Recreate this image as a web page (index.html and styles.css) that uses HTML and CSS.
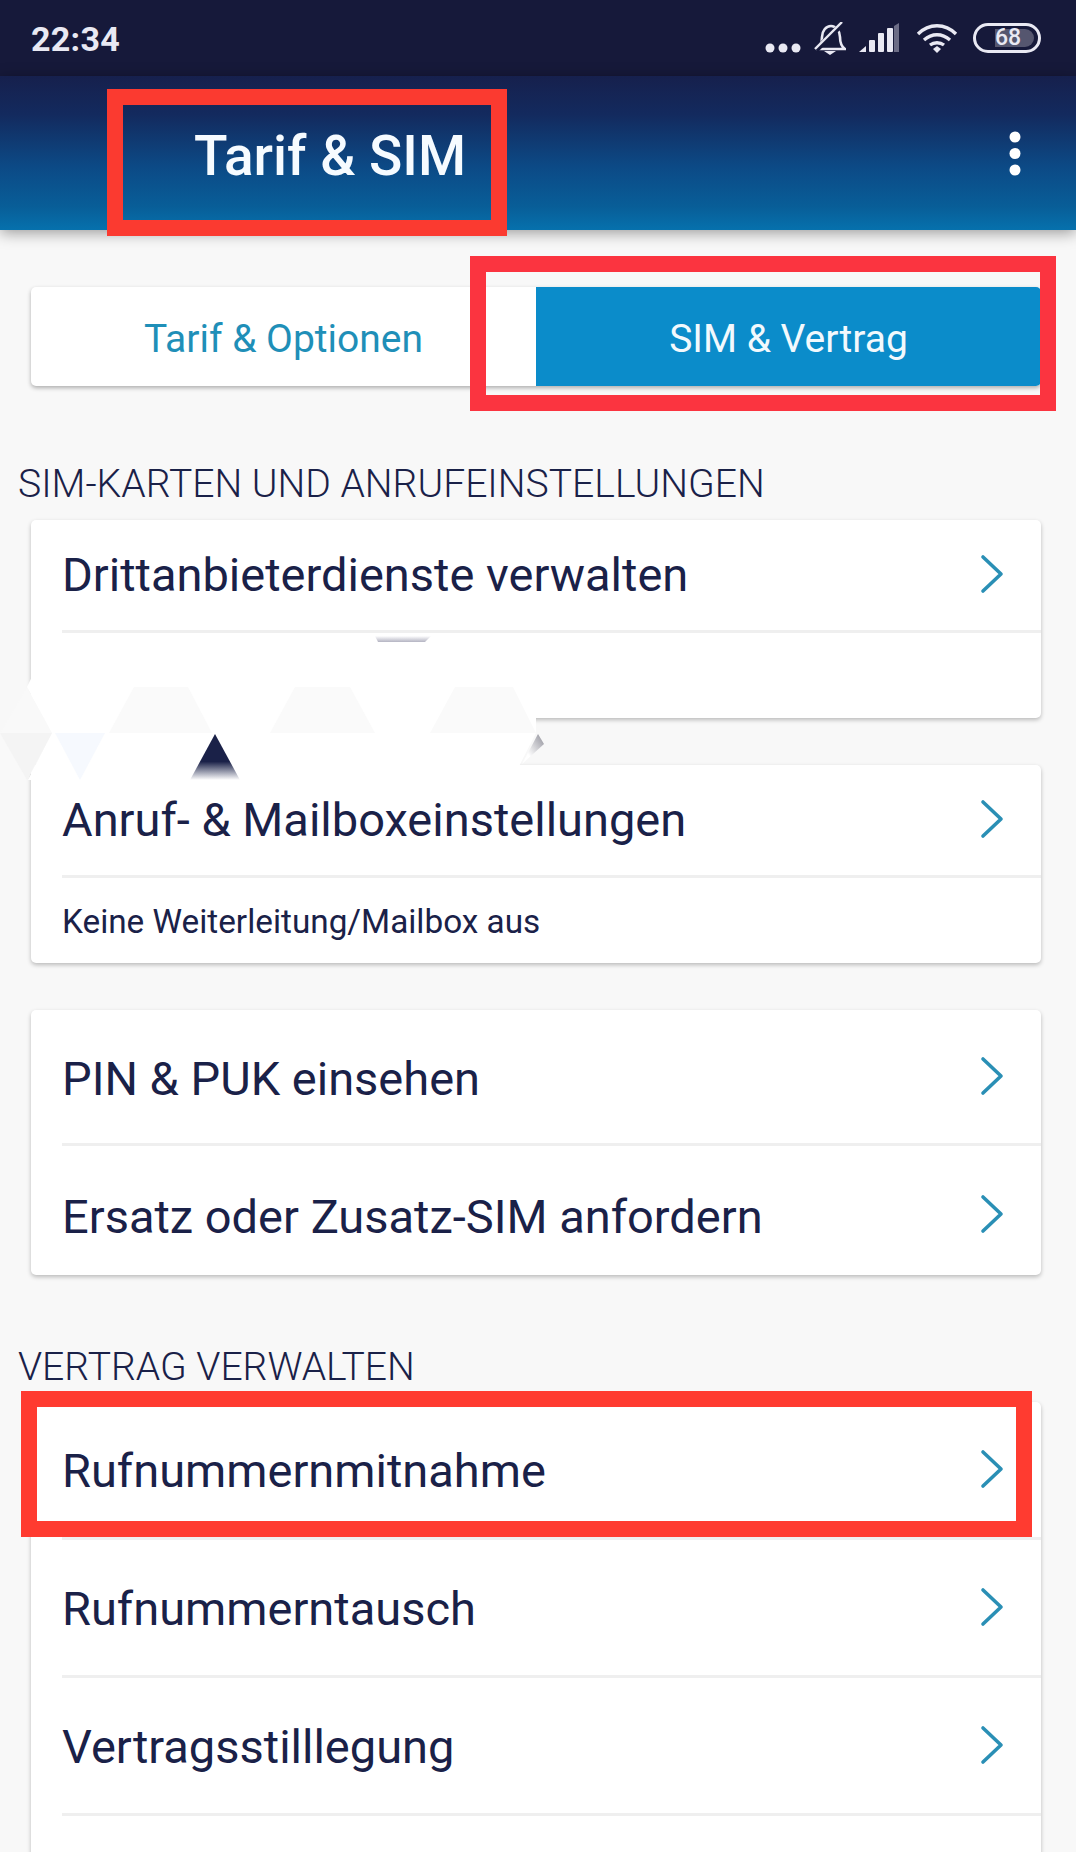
FILE: index.html
```html
<!DOCTYPE html>
<html lang="de">
<head>
<meta charset="utf-8">
<title>Tarif &amp; SIM</title>
<link rel="stylesheet" href="styles.css">
</head>
<body>
<div class="screen">
  <div class="status">
    <span class="time">22:34</span>
    <div class="status-icons">
      <svg class="dots" viewBox="0 0 36 10"><circle cx="5" cy="5" r="4.5"/><circle cx="18" cy="5" r="4.5"/><circle cx="31" cy="5" r="4.5"/></svg>
      <svg class="bell" viewBox="0 0 32 33"><path d="M2 27c4-2 6-6 6-12 0-6 4-11 9-11s9 5 9 11c0 6 2 10 5 12z" fill="none" stroke="#e9e9f3" stroke-width="2.6"/><path d="M10 29h12l-6 4z" fill="#e9e9f3"/><path d="M2 28L29 1" stroke="#16193a" stroke-width="5.500"/><path d="M1 27L28 0" stroke="#e9e9f3" stroke-width="2.4"/></svg>
      <svg class="signal" viewBox="0 0 40 30"><path d="M0 29l7-6v6z" fill="#e9e9f3"/><rect x="10" y="17" width="6" height="12" rx="1" fill="#e9e9f3"/><rect x="19" y="10" width="6" height="19" rx="1" fill="#e9e9f3"/><rect x="28" y="5" width="6" height="24" rx="1" fill="#e9e9f3"/><path d="M35 3l5-3v29h-5z" fill="#6c6d86"/></svg>
      <svg class="wifi" viewBox="0 0 42 30"><g fill="none" stroke="#e9e9f3" stroke-width="3.4"><path d="M2 11c11-11 27-11 38 0"/><path d="M8 17c8-7 18-7 26 0"/><path d="M14 22c4-3 10-3 14 0"/></g><path d="M17 26l4-3 4 3-4 4z" fill="#e9e9f3"/></svg>
      <div class="battery"><span class="battery-level">68</span></div>
    </div>
  </div>
  <header class="appbar">
    <h1 class="title">Tarif &amp; SIM</h1>
    <svg class="more" viewBox="0 0 12 45"><circle cx="6" cy="6" r="5.5"/><circle cx="6" cy="22.500" r="5.500"/><circle cx="6" cy="39" r="5.500"/></svg>
  </header>
  <main class="content">
    <div class="tabs">
      <div class="tab">Tarif &amp; Optionen</div>
      <div class="tab tab-active">SIM &amp; Vertrag</div>
    </div>
    <h2 class="section section-first">SIM-KARTEN UND ANRUFEINSTELLUNGEN</h2>
    <section class="card card-after-label">
      <div class="row row-a"><span>Drittanbieterdienste verwalten</span><svg class="chev" viewBox="0 0 24 40"><path d="M3 3l18 17L3 37"/></svg></div>
      <div class="sub"></div>
    </section>
    <section class="card card-gap">
      <div class="row row-a"><span>Anruf- &amp; Mailboxeinstellungen</span><svg class="chev" viewBox="0 0 24 40"><path d="M3 3l18 17L3 37"/></svg></div>
      <div class="sub">Keine Weiterleitung/Mailbox aus</div>
    </section>
    <section class="card card-gap">
      <div class="row row-b"><span>PIN &amp; PUK einsehen</span><svg class="chev" viewBox="0 0 24 40"><path d="M3 3l18 17L3 37"/></svg></div>
      <div class="row row-c"><span>Ersatz oder Zusatz-SIM anfordern</span><svg class="chev" viewBox="0 0 24 40"><path d="M3 3l18 17L3 37"/></svg></div>
    </section>
    <h2 class="section section-second">VERTRAG VERWALTEN</h2>
    <section class="card card-after-label card-open">
      <div class="row row-d"><span>Rufnummernmitnahme</span><svg class="chev" viewBox="0 0 24 40"><path d="M3 3l18 17L3 37"/></svg></div>
      <div class="row row-d"><span>Rufnummerntausch</span><svg class="chev" viewBox="0 0 24 40"><path d="M3 3l18 17L3 37"/></svg></div>
      <div class="row row-d"><span>Vertragsstilllegung</span><svg class="chev" viewBox="0 0 24 40"><path d="M3 3l18 17L3 37"/></svg></div>
      <div class="row row-d"></div>
    </section>
  </main>

  <svg class="glitch" viewBox="0 0 600 160">
    <defs>
      <linearGradient id="navy" x1="0" y1="0" x2="0" y2="1"><stop offset="0" stop-color="#1a2148"/><stop offset=".6" stop-color="#1a2148"/><stop offset="1" stop-color="#fff"/></linearGradient>
      <linearGradient id="sliver" x1="0" y1="0" x2="0" y2="1"><stop offset="0" stop-color="#fff"/><stop offset="1" stop-color="#b4b4c2"/></linearGradient>
      <linearGradient id="corner" x1="1" y1="0" x2="0" y2="1"><stop offset="0" stop-color="#8f8f99"/><stop offset=".7" stop-color="#fff"/></linearGradient>
    </defs>
    <path d="M40 16L27 47 53 93 27 140H0V93L27 47z" fill="#f9f9f9"/>
    <path d="M42 16H536V93L512 140H28L52 93 27 47z" fill="#fff"/>
    <path d="M134 47H188L212 93H109z" fill="#fafafa"/>
    <path d="M295 47H350L375 93H270z" fill="#fafafa"/>
    <path d="M455 47H513L536 93H430z" fill="#fafafa"/>
    <path d="M0 93H52L27 140z" fill="#f4f4f4"/>
    <path d="M55 93H105L80 140z" fill="#f6f9fe"/>
    <path d="M215 94L240 140H190z" fill="url(#navy)"/>
    <path d="M375 -4H431L425 2H378z" fill="url(#sliver)"/>
    <path d="M538 94L544 104 522 124z" fill="url(#corner)"/>
  </svg>

  <div class="mark mark-title"></div>
  <div class="mark mark-tab"></div>
  <div class="mark mark-row"></div>
</div>
</body>
</html>
```
FILE: styles.css
```css
* { box-sizing: border-box; }
html, body { margin: 0; padding: 0; }
body { background: #f8f8f8; font-family: Roboto, "Noto Sans", sans-serif; color: #1a2148; }
.screen { position: relative; width: 1076px; height: 1852px; overflow: hidden; background: #f8f8f8; }

.status { height: 76px; background: #16193a; display: flex; align-items: center; justify-content: space-between; padding: 0 35px 0 31px; }
.time { font-size: 34px; font-weight: 700; color: #e9e9f3; letter-spacing: .3px; padding-top: 2px; }
.status-icons { display: flex; align-items: center; }
.status-icons svg { display: block; flex: none; }
.dots { width: 36px; height: 10px; fill: #e9e9f3; margin-top: 20px; }
.bell { width: 32px; height: 33px; margin-left: 13px; }
.signal { width: 40px; height: 30px; margin-left: 13px; }
.wifi { width: 42px; height: 30px; margin-left: 17px; }
.battery { width: 68px; height: 30px; margin-left: 15px; border: 3px solid #e9e9f3; border-radius: 15px; padding: 3px 4px 3px 19px; display: flex; }
.battery-level { flex: 1; background: #55566f; border-radius: 0 9px 9px 0; color: #e9e9f3; font-size: 23px; line-height: 18px; font-weight: 500; }

.appbar { height: 154px; display: flex; align-items: center; justify-content: space-between; padding: 0 55px 0 194px; background: linear-gradient(180deg, #16204d 0%, #132a5e 25%, #0c4a86 59%, #085e98 85%, #0671ad 100%); box-shadow: 0 3px 14px rgba(0, 0, 0, .38); }
.title { margin: 0; padding-top: 5px; font-size: 55px; font-weight: 500; color: #f6fbff; }
.more { width: 12px; height: 45px; fill: #fff; }

.content { padding: 57px 35px 0 31px; }
.tabs { height: 99px; display: flex; background: #fff; border-radius: 5px; box-shadow: 0 2px 4px rgba(0, 0, 0, .3); overflow: hidden; }
.tab { flex: 1; display: flex; align-items: center; justify-content: center; padding-top: 5px; font-size: 39px; color: #1f8fb8; }
.tab-active { background: #0b8cca; color: #f2f9fd; }

.section { margin: 0 0 0 -13px; padding-top: 3px; font-size: 39.100px; line-height: 46px; font-weight: 300; color: #1a2148; white-space: nowrap; }
.section-first { margin-top: 72px; margin-bottom: -1px; }
.section-second { margin-top: 66px; margin-bottom: -2px; }

.card { background: #fff; border-radius: 5px; box-shadow: 0 2px 4px rgba(0, 0, 0, .25); }
.card-after-label { margin-top: 14px; }
.card-gap { margin-top: 47px; }
.card-open { height: 600px; }

.row { display: flex; align-items: center; justify-content: space-between; margin-left: 31px; padding-right: 37px; font-size: 47px; color: #1a2148; border-bottom: 3px solid #efefef; }
.row-a { height: 113px; padding-bottom: 2px; }
.row-b { height: 136px; padding-bottom: 2px; }
.row-b span { padding-top: 5px; }
.row-c { height: 129px; padding-top: 7px; border-bottom: 0; }
.row-c span { padding-top: 5px; }
.row-d { height: 138px; padding-bottom: 2px; }
.row-d span { padding-top: 4px; }
.chev { width: 24px; height: 40px; fill: none; stroke: #2a8fb5; stroke-width: 3.600; stroke-linecap: round; stroke-linejoin: round; }
.sub { height: 85px; margin-left: 31px; padding-top: 2px; display: flex; align-items: center; font-size: 33.300px; color: #1a2148; }

.glitch { position: absolute; left: 0; top: 640px; width: 600px; height: 160px; overflow: visible; }

.mark { position: absolute; border: 16px solid #ff3b30; }
.mark-title { left: 107px; top: 89px; width: 400px; height: 147px; border-color: #fb3a30; }
.mark-tab { left: 470px; top: 256px; width: 586px; height: 155px; border-color: #fb3440; }
.mark-row { left: 21px; top: 1391px; width: 1011px; height: 146px; }
```
